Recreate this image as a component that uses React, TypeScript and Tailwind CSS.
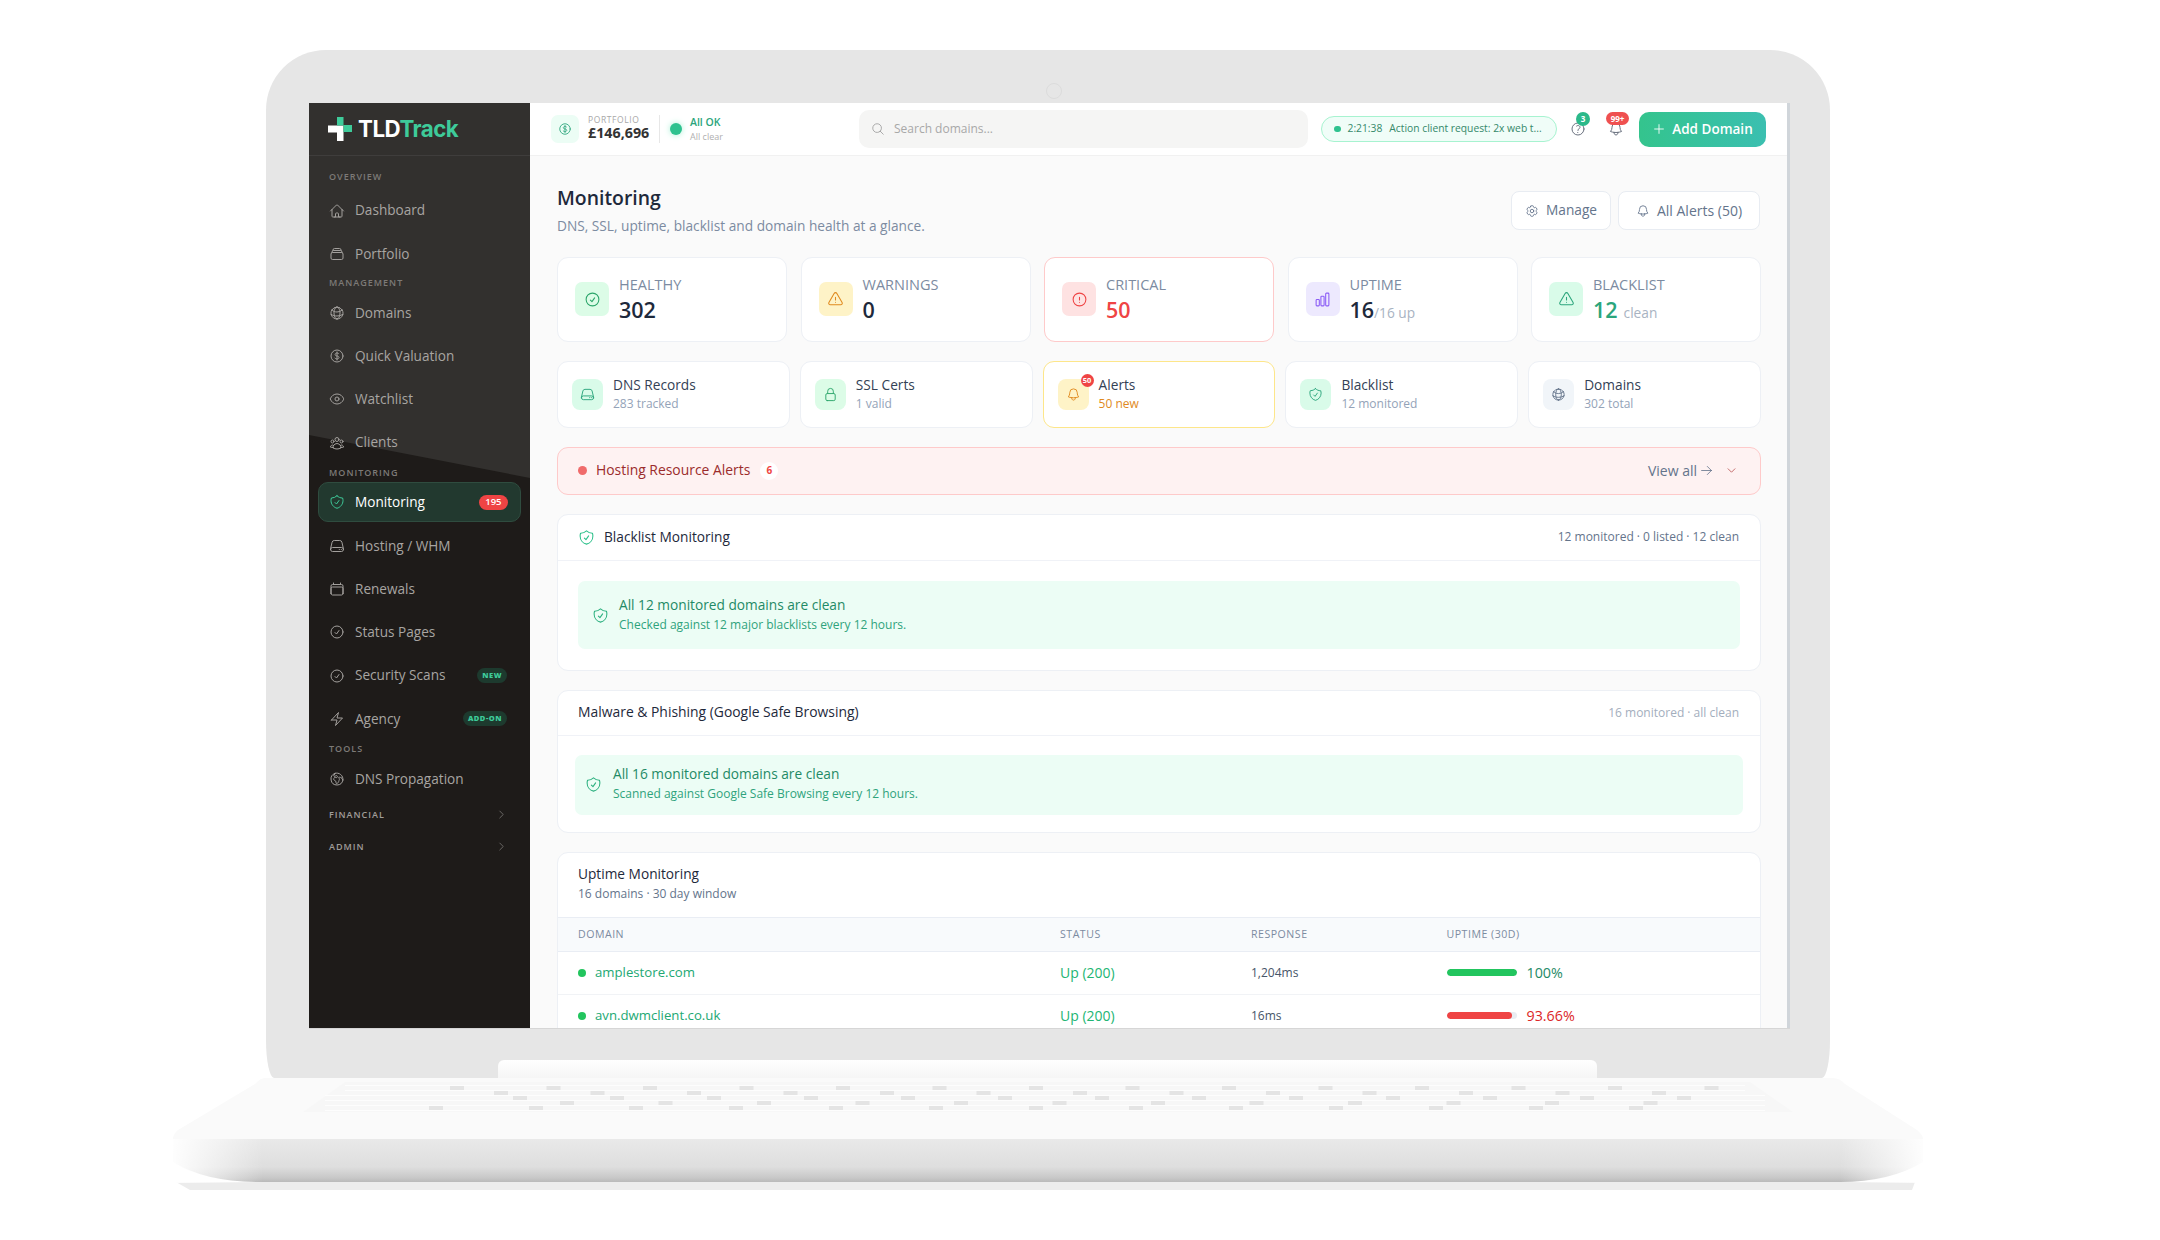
import React from "react";
import {
  HiOutlineHome, HiOutlineRectangleStack, HiOutlineGlobeAlt, HiOutlineCurrencyDollar, HiOutlineEye, HiOutlineUserGroup,
  HiOutlineShieldCheck, HiOutlineServer, HiOutlineCalendar, HiOutlineCheckCircle, HiOutlineBolt, HiOutlineGlobeEuropeAfrica,
  HiOutlineChevronRight, HiOutlineChevronDown, HiOutlineMagnifyingGlass, HiOutlineQuestionMarkCircle, HiOutlineBell, HiOutlinePlus,
  HiOutlineCog6Tooth, HiOutlineExclamationTriangle, HiOutlineExclamationCircle, HiOutlineChartBar, HiOutlineLockClosed, HiOutlineArrowRight,
} from "react-icons/hi2";

type IconT = React.ComponentType<{ className?: string }>;

function Label({ children }: { children: React.ReactNode }) {
  return <div className="h-[14px] pl-[20px] flex items-center text-[9px] font-semibold tracking-[1px] text-[#7d7a77]">{children}</div>;
}

function NavRow({ Icon, label, right }: { Icon: IconT; label: string; right?: React.ReactNode }) {
  return (
    <div className="h-[43.3px] pl-[20px] pr-[23px] flex items-center text-[13.6px] text-[#a8a5a2]">
      <Icon className="w-[16px] h-[16px] mr-[10px] text-[#a3a09d]" />
      <span className="flex-1">{label}</span>
      {right}
    </div>
  );
}

function Sidebar() {
  return (
    <aside className="relative w-[221px] shrink-0 bg-[#1e1b19] overflow-hidden">
      <div className="absolute inset-0 bg-[#32302e] [clip-path:polygon(0_0,100%_0,100%_375px,0_332px)]" />
      <div className="relative">
        <div className="h-[53px] border-b border-[#3f3d3c] pl-[19px] flex items-center gap-[6px]">
          <svg width="24" height="24" viewBox="0 0 24 24">
            <path d="M0 8.5h9V0h0v8.5h6.5V24H9V15.5H0z" fill="#fff" />
            <path d="M9 0h6.5v8H24v7H15.5V8.5H9z" fill="#3ecb9a" />
          </svg>
          <span className="font-['Inter',sans-serif] text-[22.3px] font-bold tracking-[-0.5px] text-white leading-none">
            TLD<span className="text-[#3ecb9a]">Track</span>
          </span>
        </div>
        <div className="pt-[14px]">
          <Label>OVERVIEW</Label>
          <div className="h-[5px]" />
          <NavRow Icon={HiOutlineHome} label="Dashboard" />
          <NavRow Icon={HiOutlineRectangleStack} label="Portfolio" />
          <Label>MANAGEMENT</Label>
          <div className="h-[1.5px]" />
          <NavRow Icon={HiOutlineGlobeAlt} label="Domains" />
          <NavRow Icon={HiOutlineCurrencyDollar} label="Quick Valuation" />
          <NavRow Icon={HiOutlineEye} label="Watchlist" />
          <NavRow Icon={HiOutlineUserGroup} label="Clients" />
          <div className="h-[1px]" />
          <Label>MONITORING</Label>
          <div className="h-[1.5px]" />
          <div className="h-[43.3px] px-[9px] flex items-center">
            <div className="w-full h-[40px] rounded-[10px] bg-[#22392f] border border-[#2f4c3f] pl-[10px] pr-[12px] flex items-center text-[13.6px] font-medium text-white">
              <HiOutlineShieldCheck className="w-[16px] h-[16px] mr-[10px] text-[#3ecb9a]" />
              <span className="flex-1">Monitoring</span>
              <span className="h-[15px] px-[6.5px] rounded-full bg-[#ef4444] text-[9.5px] font-semibold flex items-center">195</span>
            </div>
          </div>
          <NavRow Icon={HiOutlineServer} label="Hosting / WHM" />
          <NavRow Icon={HiOutlineCalendar} label="Renewals" />
          <NavRow Icon={HiOutlineCheckCircle} label="Status Pages" />
          <NavRow Icon={HiOutlineCheckCircle} label="Security Scans" right={<span className="h-[15px] px-[5px] rounded-full bg-[#1d3a2e] text-[#3ecb9a] text-[7.5px] font-extrabold tracking-[0.5px] flex items-center">NEW</span>} />
          <NavRow Icon={HiOutlineBolt} label="Agency" right={<span className="h-[15px] px-[5px] rounded-full bg-[#1d3a2e] text-[#3ecb9a] text-[7.5px] font-extrabold tracking-[0.5px] flex items-center">ADD-ON</span>} />
          <div className="h-[1px]" />
          <Label>TOOLS</Label>
          <div className="h-[1.5px]" />
          <NavRow Icon={HiOutlineGlobeEuropeAfrica} label="DNS Propagation" />
          <div className="-mt-[1.5px]">
            {["FINANCIAL", "ADMIN"].map((t) => (
              <div key={t} className="h-[32px] pl-[20px] pr-[23px] flex items-center justify-between text-[9px] font-semibold tracking-[1px] text-[#a09d9a]">
                {t}
                <HiOutlineChevronRight className="w-[11px] h-[11px] text-[#8a8785]" />
              </div>
            ))}
          </div>
        </div>
      </div>
    </aside>
  );
}

function TopBar() {
  return (
    <header className="h-[53px] shrink-0 bg-white border-b border-[#f1f1f1] pl-[21px] pr-[21px] flex items-center">
      <div className="w-[28px] h-[28px] rounded-[7px] bg-[#ecfdf5] flex items-center justify-center">
        <HiOutlineCurrencyDollar className="w-[14px] h-[14px] text-[#2ba57c]" />
      </div>
      <div className="ml-[9px] w-[71px] leading-none -mt-[2px]">
        <div className="text-[8.5px] tracking-[0.6px] text-[#a8a8a8] mb-[2px]">PORTFOLIO</div>
        <div className="text-[14.3px] font-bold text-[#333]">£146,696</div>
      </div>
      <div className="w-px h-[28px] bg-[#e7e7e7] mr-[10px]" />
      <span className="w-[12px] h-[12px] rounded-full bg-[#2fc28f] shadow-[0_0_6px_#a7f0d4]" />
      <div className="ml-[8px] w-[169px] leading-none">
        <div className="text-[10.5px] font-semibold text-[#2ba57c] mb-[4px]">All OK</div>
        <div className="text-[9px] text-[#b0b0b0]">All clear</div>
      </div>
      <div className="w-[449px] h-[38px] rounded-[10px] bg-[#f5f5f4] pl-[12px] flex items-center text-[12px] text-[#a8a8a8]">
        <HiOutlineMagnifyingGlass className="w-[14px] h-[14px] mr-[9px] text-[#a0a0a0]" />
        Search domains...
      </div>
      <div className="ml-[13px] w-[236px] h-[26px] rounded-full border border-[#a7f3d0] bg-[#f0fdf8] pl-[12px] flex items-center text-[10.3px] text-[#35896a] whitespace-nowrap">
        <span className="w-[6.5px] h-[6.5px] rounded-full bg-[#2fc28f] mr-[7px]" />
        <span>2:21:38</span>
        <span className="ml-[7px]">Action client request: 2x web t...</span>
      </div>
      <div className="relative ml-[13px] w-[16px] h-[16px]">
        <HiOutlineQuestionMarkCircle className="w-[16px] h-[16px] text-[#6b7280]" />
        <span className="absolute -top-[9px] left-[6px] w-[14px] h-[14px] rounded-full bg-[#2bb98a] text-white text-[8px] font-bold flex items-center justify-center">3</span>
      </div>
      <div className="relative ml-[22px] w-[16px] h-[16px]">
        <HiOutlineBell className="w-[16px] h-[16px] text-[#6b7280]" />
        <span className="absolute -top-[9px] left-[-2px] w-[23px] h-[13px] rounded-full bg-[#ef5050] text-white text-[8px] font-bold flex items-center justify-center">99+</span>
      </div>
      <div className="ml-[15px] w-[127px] h-[35px] rounded-[10px] bg-gradient-to-r from-[#34c48d] to-[#3bbfb0] text-white text-[13.5px] font-semibold flex items-center justify-center gap-[6px]">
        <HiOutlinePlus className="w-[14px] h-[14px]" />
        Add Domain
      </div>
    </header>
  );
}

function Stat({ Icon, box, ic, title, border, children }: { Icon: IconT; box: string; ic: string; title: string; border: string; children: React.ReactNode }) {
  return (
    <div className={`h-[85px] rounded-[11px] bg-white border ${border} pl-[17px] flex items-center`}>
      <div className={`w-[34px] h-[34px] rounded-[7px] ${box} flex items-center justify-center`}>
        <Icon className={`w-[17px] h-[17px] ${ic}`} />
      </div>
      <div className="ml-[10px] leading-none">
        <div className="text-[14.5px] text-[#7c8ba1] mb-[6px]">{title}</div>
        {children}
      </div>
    </div>
  );
}

function Quick({ Icon, box, ic, title, sub, subc, border, badge }: { Icon: IconT; box: string; ic: string; title: string; sub: string; subc: string; border: string; badge?: string }) {
  return (
    <div className={`h-[66.5px] rounded-[11px] bg-white border ${border} pl-[14px] flex items-center`}>
      <div className={`relative w-[31px] h-[31px] rounded-[8px] ${box} flex items-center justify-center`}>
        <Icon className={`w-[15px] h-[15px] ${ic}`} />
        {badge && <span className="absolute -top-[5px] -right-[5px] w-[13px] h-[13px] rounded-full bg-[#ef4444] text-white text-[7.5px] font-bold flex items-center justify-center">{badge}</span>}
      </div>
      <div className="ml-[10px] leading-none -mt-[1px]">
        <div className="text-[13.7px] text-[#334155] mb-[6px]">{title}</div>
        <div className={`text-[12px] ${subc}`}>{sub}</div>
      </div>
    </div>
  );
}

function CleanBanner({ Icon, title, sub, cls, gap }: { Icon: IconT; title: string; sub: string; cls: string; gap: string }) {
  return (
    <div className={`${cls} rounded-[7px] bg-[#ecfdf5] flex items-center`}>
      <Icon className="w-[17px] h-[17px] text-[#2bb07f] shrink-0" />
      <div className={`${gap} leading-none`}>
        <div className="text-[13.7px] text-[#1f8a66] mb-[7px]">{title}</div>
        <div className="text-[12px] text-[#2fa37c]">{sub}</div>
      </div>
    </div>
  );
}

function TableRow({ domain, ms, pct, pctc, bar, w }: { domain: string; ms: string; pct: string; pctc: string; bar: string; w: number }) {
  return (
    <div className="h-[42.7px] shrink-0 border-b border-[#f1f3f6] grid grid-cols-[482px_191px_195.5px_1fr] pl-[20px] items-center">
      <div className="flex items-center text-[13.2px] text-[#22a873]">
        <span className="w-[8px] h-[8px] rounded-full bg-[#22c55e] mr-[9px]" />
        {domain}
      </div>
      <div className="text-[14px] text-[#22b573]">Up (200)</div>
      <div className="text-[12px] text-[#475569]">{ms}</div>
      <div className="flex items-center">
        <div className="w-[70px] h-[7px] rounded-full bg-[#e9edf2] overflow-hidden">
          <div className={`h-full rounded-full ${bar}`} style={{ width: `${w}%` }} />
        </div>
        <span className={`ml-[10px] text-[14.3px] ${pctc}`}>{pct}</span>
      </div>
    </div>
  );
}

function Main() {
  return (
    <main className="flex-1 min-w-0 flex flex-col bg-[#fafafa] border-r-[3px] border-[#d0d5da]">
      <TopBar />
      <div className="flex-1 overflow-hidden pl-[27px] pr-[26px] pt-[31px]">
        <div className="h-[69.5px] flex justify-between">
          <div>
            <h1 className="text-[19.4px] font-semibold leading-[22px] text-[#1e293b]">Monitoring</h1>
            <p className="mt-[9px] text-[13.7px] leading-[16px] text-[#7c8ba1]">DNS, SSL, uptime, blacklist and domain health at a glance.</p>
          </div>
          <div className="mt-[4px] mr-[1px] flex gap-[7px] h-[39px]">
            <div className="w-[100px] rounded-[8px] bg-white border border-[#e8ecf2] flex items-center justify-center gap-[7px] text-[13.7px] text-[#64748b]">
              <HiOutlineCog6Tooth className="w-[14px] h-[14px]" />Manage
            </div>
            <div className="w-[142px] rounded-[8px] bg-white border border-[#e8ecf2] flex items-center justify-center gap-[7px] text-[14px] text-[#64748b]">
              <HiOutlineBell className="w-[14px] h-[14px]" />All Alerts (50)
            </div>
          </div>
        </div>

        <div className="grid grid-cols-5 gap-[13.5px]">
          <Stat Icon={HiOutlineCheckCircle} box="bg-[#dcfce7]" ic="text-[#2ba56a]" title="HEALTHY" border="border-[#edf0f5]">
            <div className="text-[21.5px] font-semibold text-[#1e293b]">302</div>
          </Stat>
          <Stat Icon={HiOutlineExclamationTriangle} box="bg-[#fef3c7]" ic="text-[#e08a1e]" title="WARNINGS" border="border-[#edf0f5]">
            <div className="text-[21.5px] font-semibold text-[#1e293b]">0</div>
          </Stat>
          <Stat Icon={HiOutlineExclamationCircle} box="bg-[#fee2e2]" ic="text-[#ef4444]" title="CRITICAL" border="border-[#fecaca]">
            <div className="text-[21.5px] font-semibold text-[#ef4444]">50</div>
          </Stat>
          <Stat Icon={HiOutlineChartBar} box="bg-[#ede9fe]" ic="text-[#8b5cf6]" title="UPTIME" border="border-[#edf0f5]">
            <div className="text-[21.5px] font-semibold text-[#1e293b]">16<span className="text-[13.7px] font-normal text-[#a8b3c2]">/16 up</span></div>
          </Stat>
          <Stat Icon={HiOutlineExclamationTriangle} box="bg-[#d9fbe9]" ic="text-[#2ba57c]" title="BLACKLIST" border="border-[#edf0f5]">
            <div className="text-[21.5px] font-semibold text-[#2ba57c]">12<span className="ml-[6px] text-[13.7px] font-normal text-[#a8b3c2]">clean</span></div>
          </Stat>
        </div>

        <div className="mt-[19.5px] grid grid-cols-5 gap-[10px]">
          <Quick Icon={HiOutlineServer} box="bg-[#d9fbe9]" ic="text-[#2ba57c]" title="DNS Records" sub="283 tracked" subc="text-[#94a3b8]" border="border-[#edf0f5]" />
          <Quick Icon={HiOutlineLockClosed} box="bg-[#dcfce7]" ic="text-[#2ba56a]" title="SSL Certs" sub="1 valid" subc="text-[#94a3b8]" border="border-[#edf0f5]" />
          <Quick Icon={HiOutlineBell} box="bg-[#fef3c7]" ic="text-[#e08a1e]" title="Alerts" sub="50 new" subc="text-[#e08a1e]" border="border-[#fde68a]" badge="50" />
          <Quick Icon={HiOutlineShieldCheck} box="bg-[#d9fbe9]" ic="text-[#2ba57c]" title="Blacklist" sub="12 monitored" subc="text-[#94a3b8]" border="border-[#edf0f5]" />
          <Quick Icon={HiOutlineGlobeAlt} box="bg-[#f1f5f9]" ic="text-[#64748b]" title="Domains" sub="302 total" subc="text-[#94a3b8]" border="border-[#edf0f5]" />
        </div>

        <div className="mt-[19.5px] h-[47.5px] rounded-[11px] bg-[#fef2f2] border border-[#fecaca] pl-[20px] pr-[23px] flex items-center">
          <span className="w-[9px] h-[9px] rounded-full bg-[#f06b6b]" />
          <span className="ml-[9px] text-[13.9px] text-[#9b2c2c]">Hosting Resource Alerts</span>
          <span className="ml-[10px] w-[18px] h-[18px] rounded-full bg-white text-[10px] font-bold text-[#ef4444] flex items-center justify-center">6</span>
          <span className="flex-1" />
          <span className="text-[14px] text-[#64748b]">View all</span>
          <HiOutlineArrowRight className="ml-[3px] w-[13px] h-[13px] text-[#64748b]" />
          <HiOutlineChevronDown className="ml-[13px] w-[11px] h-[11px] text-[#a33]" />
        </div>

        <section className="mt-[19.5px] h-[156.5px] rounded-[11px] bg-white border border-[#edf0f5]">
          <div className="h-[45.5px] border-b border-[#f0f2f7] pl-[20px] pr-[21px] flex items-center">
            <HiOutlineShieldCheck className="w-[17px] h-[17px] text-[#2bc08a]" />
            <span className="ml-[9px] flex-1 text-[13.7px] font-medium text-[#1e293b]">Blacklist Monitoring</span>
            <span className="text-[12px] text-[#64748b]">12 monitored · 0 listed · 12 clean</span>
          </div>
          <div className="pt-[20.5px] pl-[20px] pr-[20px]">
            <CleanBanner Icon={HiOutlineShieldCheck} title="All 12 monitored domains are clean" sub="Checked against 12 major blacklists every 12 hours." cls="h-[68px] pl-[14px]" gap="ml-[10px] -mt-[1px]" />
          </div>
        </section>

        <section className="mt-[19px] h-[143px] rounded-[11px] bg-white border border-[#edf0f5]">
          <div className="h-[45.5px] border-b border-[#f0f2f7] pl-[20px] pr-[21px] flex items-center">
            <span className="flex-1 text-[13.9px] font-medium text-[#1e293b]">Malware &amp; Phishing (Google Safe Browsing)</span>
            <span className="text-[12px] text-[#a3aebd]">16 monitored · all clean</span>
          </div>
          <div className="pt-[18.5px] pl-[17px] pr-[17px]">
            <CleanBanner Icon={HiOutlineShieldCheck} title="All 16 monitored domains are clean" sub="Scanned against Google Safe Browsing every 12 hours." cls="h-[60px] pl-[10px]" gap="ml-[11px] -mt-[2px]" />
          </div>
        </section>

        <section className="mt-[19.5px] h-[240px] rounded-t-[11px] bg-white border border-[#edf0f5] flex flex-col">
          <div className="h-[64px] shrink-0 pl-[20px] pt-[14px] leading-none">
            <div className="text-[13.7px] font-medium text-[#1e293b] mb-[7px]">Uptime Monitoring</div>
            <div className="text-[12px] text-[#64748b]">16 domains · 30 day window</div>
          </div>
          <div className="h-[35px] shrink-0 bg-[#f8fafc] border-y border-[#e9edf4] grid grid-cols-[482px_191px_195.5px_1fr] pl-[20px] items-center text-[10.6px] font-medium tracking-[0.5px] text-[#7c8ba1]">
            <span>DOMAIN</span><span>STATUS</span><span>RESPONSE</span><span>UPTIME (30D)</span>
          </div>
          <TableRow domain="amplestore.com" ms="1,204ms" pct="100%" pctc="text-[#1f8a66]" bar="bg-[#22c55e]" w={100} />
          <TableRow domain="avn.dwmclient.co.uk" ms="16ms" pct="93.66%" pctc="text-[#dc2626]" bar="bg-[#ef4444]" w={93.66} />
        </section>
      </div>
    </main>
  );
}

function LaptopBase() {
  const rows: [number, number, number][] = [
    [1088, 450, 96.5], [1093, 494, 96.5], [1098, 513, 97], [1103, 560, 98.5], [1108, 429, 100],
  ];
  return (
    <svg width="2160" height="120" viewBox="0 1078 2160 120" className="block">
      <defs>
        <linearGradient id="front" x1="0" y1="0" x2="0" y2="1">
          <stop offset="0" stopColor="#e9e9e9" />
          <stop offset="0.65" stopColor="#dedede" />
          <stop offset="0.9" stopColor="#c8c8c8" />
          <stop offset="1" stopColor="#b9b9b9" />
        </linearGradient>
        <linearGradient id="fadeL" x1="0" y1="0" x2="1" y2="0">
          <stop offset="0" stopColor="#fff" stopOpacity="0.95" />
          <stop offset="1" stopColor="#fff" stopOpacity="0" />
        </linearGradient>
        <linearGradient id="fadeR" x1="0" y1="0" x2="1" y2="0">
          <stop offset="0" stopColor="#fff" stopOpacity="0" />
          <stop offset="1" stopColor="#fff" stopOpacity="0.95" />
        </linearGradient>
      </defs>
      <path d="M176 1182 L1915 1182 L1912 1190 L190 1190 Z" fill="#ececec" />
      <path d="M173 1139 L1923 1139 L1923 1162 Q1890 1182 1840 1182 L260 1182 Q205 1182 173 1162 Z" fill="url(#front)" />
      <rect x="173" y="1139" width="90" height="44" fill="url(#fadeL)" />
      <rect x="1840" y="1139" width="84" height="44" fill="url(#fadeR)" />
      <path d="M265 1078 L1833 1078 Q1840 1078 1845 1084 L1917 1130 Q1923 1135 1923 1139 L173 1139 Q173 1134 178 1130 L255 1084 Q260 1078 265 1078 Z" fill="#fafafa" />
      <path d="M345 1082 L1750 1082 L1793 1112 L303 1112 Z" fill="#f7f7f7" />
      {[1085, 1090, 1095, 1100, 1105, 1110].map((y) => (
        <rect key={y} x={y < 1095 ? 345 : 325} y={y} width={y < 1095 ? 1400 : 1440} height="1" fill="#fdfdfd" />
      ))}
      {rows.map(([y, x0, dx]) =>
        Array.from({ length: 14 }, (_, i) => {
          const x = x0 + i * dx;
          return x < 1720 ? <rect key={`${y}-${i}`} x={x} y={y - 2} width="14" height="4" fill="#e4e4e4" /> : null;
        })
      )}
    </svg>
  );
}

export default function App() {
  return (
    <div className="w-[2160px] h-[1240px] overflow-hidden bg-white pt-[50px] font-['Open_Sans',sans-serif]">
      <div className="relative ml-[266px] w-[1564px] h-[1028px] rounded-[60px_60px_8px_8px/60px_60px_38px_38px] bg-[#e6e6e6] pt-[53px] pl-[43px]">
        <div className="absolute top-[33px] left-[780px] w-[16px] h-[16px] rounded-full border border-[#dcdcdc]" />
        <div className="w-[1481px] h-[926px] flex overflow-hidden border-b border-[#d6d6d6]">
          <Sidebar />
          <Main />
        </div>
        <div className="absolute left-[232px] right-[233px] bottom-0 h-[18px] rounded-t-[6px] bg-gradient-to-b from-[#ffffff] to-[#f6f6f6]" />
      </div>
      <LaptopBase />
    </div>
  );
}
